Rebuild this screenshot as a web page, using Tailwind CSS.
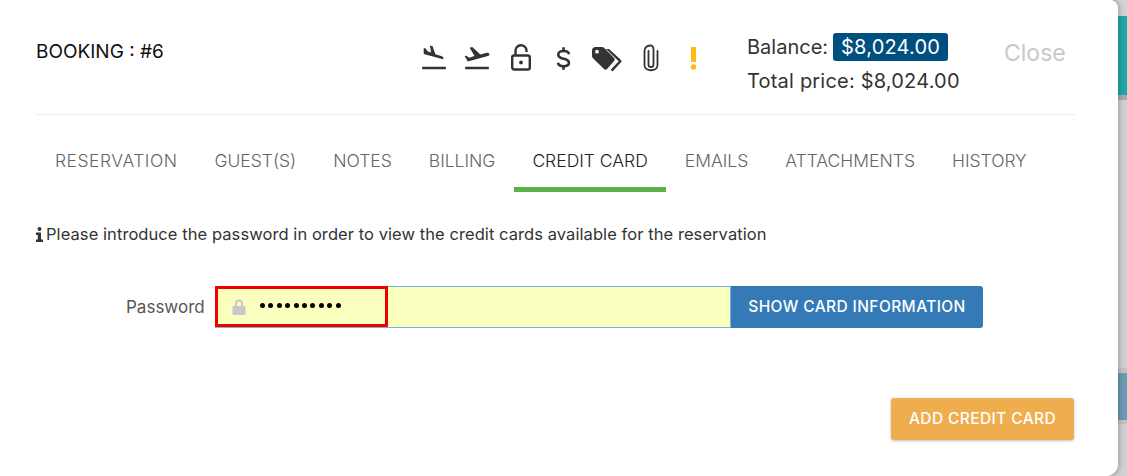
<!DOCTYPE html>
<html lang="en">
<head>
    <meta charset="UTF-8">
    <meta name="viewport" content="width=device-width, initial-scale=1.0">
    <title>Booking</title>
    <script src="https://cdn.jsdelivr.net/npm/@tailwindcss/browser@4"></script>
</head>
<body class="bg-[#cfcfcf] font-['Inter','Liberation_Sans',sans-serif]">
    <div class="flex h-[476px] w-[1127px] overflow-hidden">
        <!-- modal -->
        <div class="relative z-10 w-[1118px] h-[476px] bg-white rounded-br-[12px] rounded-tr-[8px] px-[36px] shrink-0 shadow-[0_0_6px_rgba(0,0,0,0.35)]">
            <div class="flex h-[115px] border-b border-[#eeeeee] w-[1039px]">
                <div class="w-[385px] pt-[41px] text-[19px] leading-[22px] text-[#111]">BOOKING : #6</div>
                <div class="w-[326px] pt-[45px] flex items-start">
                    <!-- arrival -->
                    <svg class="w-[26px] h-[26px] mr-[17px]" viewBox="1 2 22 22" fill="#333"><path d="M2 20.500h20v2H2zM8.500 2.500l2.300.6 2.400 6.800 5.500 1.600c1 .3 1.500 1.200 1.200 2.100l-.2.500-16.400-4.500V4.500l1.600.4 1.900 2.600 2.800.8z"/></svg>
                    <!-- departure -->
                    <svg class="w-[26px] h-[26px] mr-[20px]" viewBox="1 2 22 22" fill="#333"><path d="M2 20.500h20v2H2zM22.500 9.700c-.3-.9-1.200-1.400-2.100-1.200l-5.600 1.500-6.800-6.300-2.200.6 4.100 7.100-4.600 1.300-2.200-1.700-1.500.4 2.600 4.600 17-4.600c.9-.3 1.500-.9 1.300-1.700z"/></svg>
                    <!-- lock open -->
                    <svg class="w-[22px] h-[27px] mr-[24px] -mt-[1px]" viewBox="0 0 22 27" fill="none" stroke="#333" stroke-width="2.400"><path d="M5.500 11.500V7a5.500 5.500 0 0 1 11 -.5v1.500"/><rect x="2.200" y="11.500" width="17.600" height="14" rx="2"/><circle cx="11" cy="18.500" r="1.900" fill="#333" stroke="none"/></svg>
                    <!-- dollar -->
                    <svg class="w-[15px] h-[27px] mr-[21px]" viewBox="0 0 16 28" fill="none" stroke="#333" stroke-width="2.800"><path d="M14 9.500C13.500 7 11 6 8 6 5 6 2.400 7.400 2.400 10c0 6 11.400 2.500 11.400 8.500 0 2.500-2.800 3.700-5.800 3.700-3 0-5.500-1.200-6-3.700"/><path d="M8 2v4M8 22v4"/></svg>
                    <!-- tags -->
                    <svg class="w-[30px] h-[26px] mr-[21px] mt-[1px]" viewBox="0 0 30 26" fill="#333"><path d="M0 4.500V10c0 1 .4 1.600 1 2.200l11 10.800c1 .9 2.200 .9 3.100 0l7-8.100c.8-.9.800-2.100 0-3L12 1.800C11.400 1.200 10.700 1 10 1H3.500C1.500 1 0 2.500 0 4.500zm5-.7a1.900 1.900 0 1 1 0 3.800 1.900 1.900 0 0 1 0-3.800z"/><path d="M17 3l12 11c.7.700.7 1.500 0 2.200l-8.500 9.300-1.800-1.700 8-8.500L14 3z"/></svg>
                    <!-- paperclip -->
                    <svg class="w-[16px] h-[28px] mr-[31px] -mt-[1px]" viewBox="0 0 16 28" fill="none" stroke="#333" stroke-width="1.800" stroke-linecap="round"><path d="M5.500 7v13.500c0 3.500 5 3.500 5 0V6C10.500 3 9.500 1.500 8 1.500 4.500 1.500 1.500 3 1.500 7v14c0 7 13 7 13 0V7"/></svg>
                    <!-- exclamation -->
                    <svg class="w-[7px] h-[23px] mt-[2px]" viewBox="0 0 7 23" fill="#fdbd10"><path d="M1 0h5v15H1z"/><circle cx="3.500" cy="20" r="2.800"/></svg>
                </div>
                <div class="w-[257px] pt-[34px] text-[20px] leading-[24px] text-[#333] tracking-[0.2px]">
                    <div class="flex items-center h-[26px]"><span class="tracking-normal">Balance:</span><span class="ml-[5px] bg-[#00507f] text-white rounded-[3px] px-[8px] h-[28px] leading-[28px]">$8,024.00</span></div>
                    <div class="mt-[9px]">Total price: $8,024.00</div>
                </div>
                <div class="pt-[39px] text-[23px] leading-[28px] text-[#c8c8c8]">Close</div>
            </div>
            <!-- tabs -->
            <div class="flex w-[1039px] h-[77px] pl-[0.5px] text-[17.500px] font-light text-[#666]">
                <div class="px-[18.500px] pt-[34px] leading-[24px] tracking-[0.5px]">RESERVATION</div>
                <div class="px-[18.500px] pt-[34px] leading-[24px]">GUEST(S)</div>
                <div class="px-[18.500px] pt-[34px] leading-[24px]">NOTES</div>
                <div class="px-[18.500px] pt-[34px] leading-[24px]">BILLING</div>
                <div class="px-[18.500px] pt-[34px] leading-[24px] text-[#222] border-b-[5px] border-[#5cb147] h-[77px]">CREDIT CARD</div>
                <div class="px-[18.500px] pt-[34px] leading-[24px]">EMAILS</div>
                <div class="px-[18.500px] pt-[34px] leading-[24px]">ATTACHMENTS</div>
                <div class="px-[18.500px] pt-[34px] leading-[24px]">HISTORY</div>
            </div>
            <!-- notice -->
            <div class="flex items-center mt-[31px] h-[22px] text-[16.500px] text-[#333] tracking-[0.07px]">
                <svg class="w-[7px] h-[15px] mr-[3px]" viewBox="0 0 7 15" fill="#333"><circle cx="3.500" cy="2" r="2"/><path d="M0 5.500h5v7h2V15H0v-2.500h1.800v-4.500H0z"/></svg>
                Please introduce the password in order to view the credit cards available for the reservation
            </div>
            <!-- password row -->
            <div class="flex items-center mt-[41px] ml-[90px] h-[42px]">
                <div class="text-[17px] text-[#555] mr-[12px] w-[77px] whitespace-nowrap pt-[2px]">Password</div>
                <div class="relative flex w-[516px] h-[42px] bg-[#fbffbd] border border-[#7fb0d8]">
                    <div class="absolute -left-[1px] -top-[1px] w-[173px] h-[41px] border-[3px] border-[#ee0000]"></div>
                    <svg class="ml-[16px] mt-[12px] w-[14px] h-[16px]" viewBox="0 0 14 16" fill="#c8c8c8"><path d="M3 7V4.500a4 4 0 0 1 8 0V7h1.500c.6 0 1 .4 1 1v7c0 .6-.4 1-1 1h-11c-.6 0-1-.4-1-1V8c0-.6.4-1 1-1zm2 0h4V4.500a2 2 0 0 0-4 0z"/></svg>
                    <div class="ml-[14px] mt-[16px] flex gap-[3.400px] h-[6px]">
                        <span class="w-[5px] h-[5px] rounded-full bg-black"></span><span class="w-[5px] h-[5px] rounded-full bg-black"></span><span class="w-[5px] h-[5px] rounded-full bg-black"></span><span class="w-[5px] h-[5px] rounded-full bg-black"></span><span class="w-[5px] h-[5px] rounded-full bg-black"></span><span class="w-[5px] h-[5px] rounded-full bg-black"></span><span class="w-[5px] h-[5px] rounded-full bg-black"></span><span class="w-[5px] h-[5px] rounded-full bg-black"></span><span class="w-[5px] h-[5px] rounded-full bg-black"></span><span class="w-[5px] h-[5px] rounded-full bg-black"></span>
                    </div>
                </div>
                <button class="w-[252px] h-[42px] bg-[#337ab7] text-white text-[15.500px] tracking-[0.4px] font-medium rounded-r-[3px]">SHOW CARD INFORMATION</button>
            </div>
            <!-- footer -->
            <div class="flex justify-end w-[1038px] mt-[70px]">
                <button class="w-[183px] h-[42px] bg-[#f0ad4e] text-white text-[15.500px] tracking-[0.4px] font-medium rounded-[3px] shadow-[0_1px_3px_rgba(0,0,0,0.25)]">ADD CREDIT CARD</button>
            </div>
        </div>
        <!-- page behind the modal -->
        <div class="flex-1 h-[476px] flex flex-col">
            <div class="h-[16px] bg-[#d2d2d2]"></div>
            <div class="h-[79px] bg-[#1fa8a9]"></div>
            <div class="h-[5px] bg-[#ababab]"></div>
            <div class="h-[268px] bg-[#d0d0d0]"></div>
            <div class="h-[5px] bg-[#c4c4c4]"></div>
            <div class="h-[47px] bg-[#6a9cb5]"></div>
            <div class="h-[4px] bg-[#c4c4c4]"></div>
            <div class="flex-1 bg-[#d0d0d0]"></div>
        </div>
    </div>
</body>
</html>
